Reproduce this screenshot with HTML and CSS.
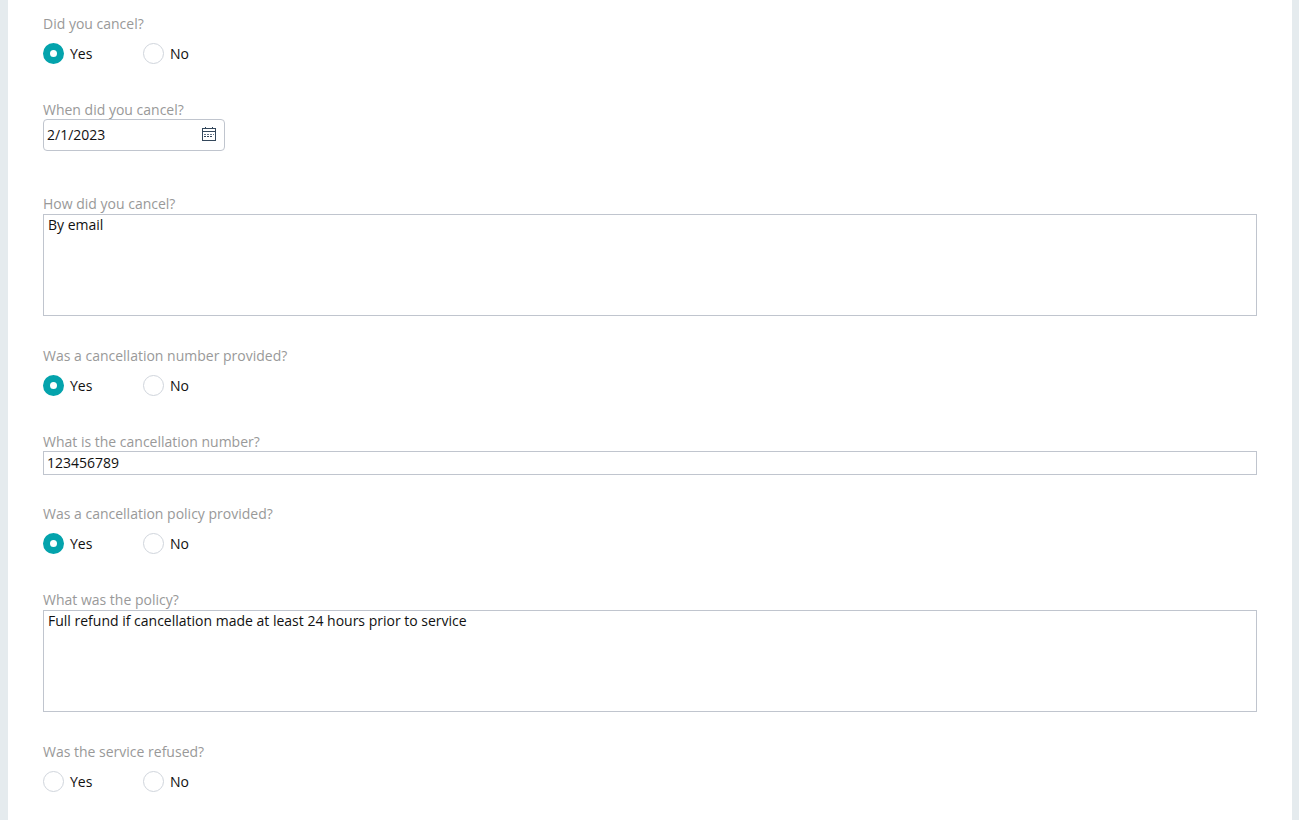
FILE: index.html
```html
<!DOCTYPE html>
<html lang="en">
<head>
  <meta charset="UTF-8" />
  <meta name="viewport" content="width=device-width, initial-scale=1.0"/>
  <title>Cancellation Questionnaire</title>
  <link rel="stylesheet" href="styles.css">
</head>
<body>

<form class="panel">
  <fieldset class="question">
    <legend>Did you cancel?</legend>
    <div class="options">
      <label class="option"><input type="radio" name="cancelled" value="yes" checked /> Yes</label>
      <label class="option"><input type="radio" name="cancelled" value="no" /> No</label>
    </div>
  </fieldset>

  <div class="field field-date">
    <label for="cancelDate">When did you cancel?</label>
    <div class="date-box">
      <input type="text" id="cancelDate" value="2/1/2023" />
      <button type="button" class="calendar-button" aria-label="Open calendar">
        <svg width="14" height="15" viewBox="0 0 14 15" fill="none" stroke="#33475b" shape-rendering="crispEdges">
          <rect x="0.5" y="1.5" width="13" height="12" />
          <path d="M0 4.500H14M3.500 0V2M10.500 0V2" />
          <path d="M2 7.500H12" stroke-dasharray="2 1" stroke="#66768a" />
          <path d="M2 9.500H10" stroke-dasharray="2 1" />
        </svg>
      </button>
    </div>
  </div>

  <div class="field field-long">
    <label for="cancelMethod">How did you cancel?</label>
    <textarea id="cancelMethod">By email</textarea>
  </div>

  <fieldset class="question">
    <legend>Was a cancellation number provided?</legend>
    <div class="options">
      <label class="option"><input type="radio" name="numberProvided" value="yes" checked /> Yes</label>
      <label class="option"><input type="radio" name="numberProvided" value="no" /> No</label>
    </div>
  </fieldset>

  <div class="field">
    <label for="cancelNumber">What is the cancellation number?</label>
    <input type="text" id="cancelNumber" class="text-box" value="123456789" />
  </div>

  <fieldset class="question">
    <legend>Was a cancellation policy provided?</legend>
    <div class="options">
      <label class="option"><input type="radio" name="policyProvided" value="yes" checked /> Yes</label>
      <label class="option"><input type="radio" name="policyProvided" value="no" /> No</label>
    </div>
  </fieldset>

  <div class="field field-long">
    <label for="policy">What was the policy?</label>
    <textarea id="policy">Full refund if cancellation made at least 24 hours prior to service</textarea>
  </div>

  <fieldset class="question">
    <legend>Was the service refused?</legend>
    <div class="options">
      <label class="option"><input type="radio" name="refused" value="yes" /> Yes</label>
      <label class="option"><input type="radio" name="refused" value="no" /> No</label>
    </div>
  </fieldset>
</form>

</body>
</html>
```
FILE: styles.css
```css
* {
  box-sizing: border-box;
}

html {
  background: white;
}

body {
  margin: 0 1px 0 0;
  padding: 0 7px 0 8px;
  background: #e5ebee;
  font-family: "Open Sans", sans-serif;
  font-size: 14px;
  line-height: 19px;
  color: #111;
}

.panel {
  min-height: 100vh;
  background: white;
  padding: 14px 35px 24px;
}

.question {
  border: none;
  margin: 0 0 36px;
  padding: 0;
}

.question:last-child {
  margin-bottom: 0;
}

legend,
.field > label {
  display: block;
  padding: 0;
  color: #999;
}

.options {
  display: flex;
  margin-top: 10px;
}

.option {
  display: flex;
  align-items: center;
  gap: 6px;
  width: 100px;
}

.option input {
  appearance: none;
  width: 21px;
  height: 21px;
  margin: 0;
  border: 1px solid #d0d5dc;
  border-radius: 50%;
  background: white;
}

.option input:checked {
  border: 7px solid #04a3ac;
}

.field {
  margin-bottom: 29px;
}

.field-date {
  margin-bottom: 43px;
}

.field-long {
  margin-bottom: 30px;
}

.field-long > label {
  margin-bottom: 1px;
}

input,
textarea {
  font: inherit;
  color: inherit;
}

.date-box {
  display: flex;
  align-items: center;
  width: 182px;
  height: 32px;
  padding-bottom: 2px;
  border: 1px solid #c0c5ce;
  border-radius: 4px;
}

.date-box input {
  flex: 1;
  min-width: 0;
  padding: 0 3px;
  border: none;
  background: none;
  outline: none;
}

.calendar-button {
  display: flex;
  padding: 0 8px;
  border: none;
  background: none;
  cursor: pointer;
}

.text-box,
textarea {
  display: block;
  width: 100%;
  border: 1px solid #c0c5ce;
  background: white;
}

.text-box {
  height: 24px;
  padding: 0 3px 2px;
}

textarea {
  height: 102px;
  padding: 0 4px;
  resize: none;
}
```
